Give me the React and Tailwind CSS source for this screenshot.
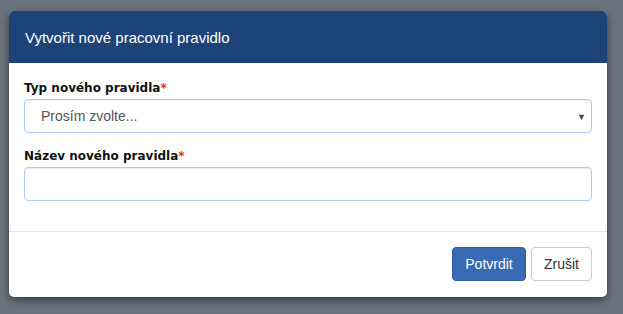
export default function App() {
  return (
    <div className="w-[623px] h-[314px] bg-[#6b737d] pt-[11px] pl-[9px]" style={{ fontFamily: '"Liberation Sans", Arial, sans-serif' }}>
      <div className="w-[598px] h-[286px] bg-white rounded-[5px] overflow-hidden shadow-[0_3px_9px_rgba(0,0,0,0.5)] flex flex-col">
        <div className="h-[52px] bg-[#1d4479] flex items-center px-[16px]">
          <h4 className="text-white text-[15px] font-normal leading-none pt-[1px]">Vytvořit nové pracovní pravidlo</h4>
        </div>
        <div className="px-[15px] pt-[17px] h-[169px] border-b border-[#e5e5e5]">
          <label className="block text-[12px] font-bold text-[#111] leading-[17px] mb-[2px]" style={{ fontFamily: '"DejaVu Sans", Verdana, sans-serif' }}>
            Typ nového pravidla<span className="text-[#e22]">*</span>
          </label>
          <div className="relative h-[34px] border border-[#aecbf0] rounded-[4px] flex items-center pl-[16px] text-[14px] text-[#555] shadow-[inset_0_1px_1px_rgba(0,0,0,0.075)]">
            Prosím zvolte...
            <span className="absolute right-[5px] top-[11px] text-[9px] text-[#444]">▼</span>
          </div>
          <label className="block text-[12px] font-bold text-[#111] leading-[17px] mt-[15px] mb-[2px]" style={{ fontFamily: '"DejaVu Sans", Verdana, sans-serif' }}>
            Název nového pravidla<span className="text-[#e22]">*</span>
          </label>
          <div className="h-[34px] border border-[#aecbf0] rounded-[4px] shadow-[inset_0_1px_1px_rgba(0,0,0,0.075)]"></div>
        </div>
        <div className="flex justify-end gap-[5px] px-[15px] pt-[15px]">
          <button className="h-[34px] w-[74px] rounded-[4px] bg-[#386bb4] text-white text-[14px] border border-[#2e5fa3]">Potvrdit</button>
          <button className="h-[34px] w-[61px] rounded-[4px] bg-white text-[#333] text-[14px] border border-[#ccc]">Zrušit</button>
        </div>
      </div>
    </div>
  );
}
